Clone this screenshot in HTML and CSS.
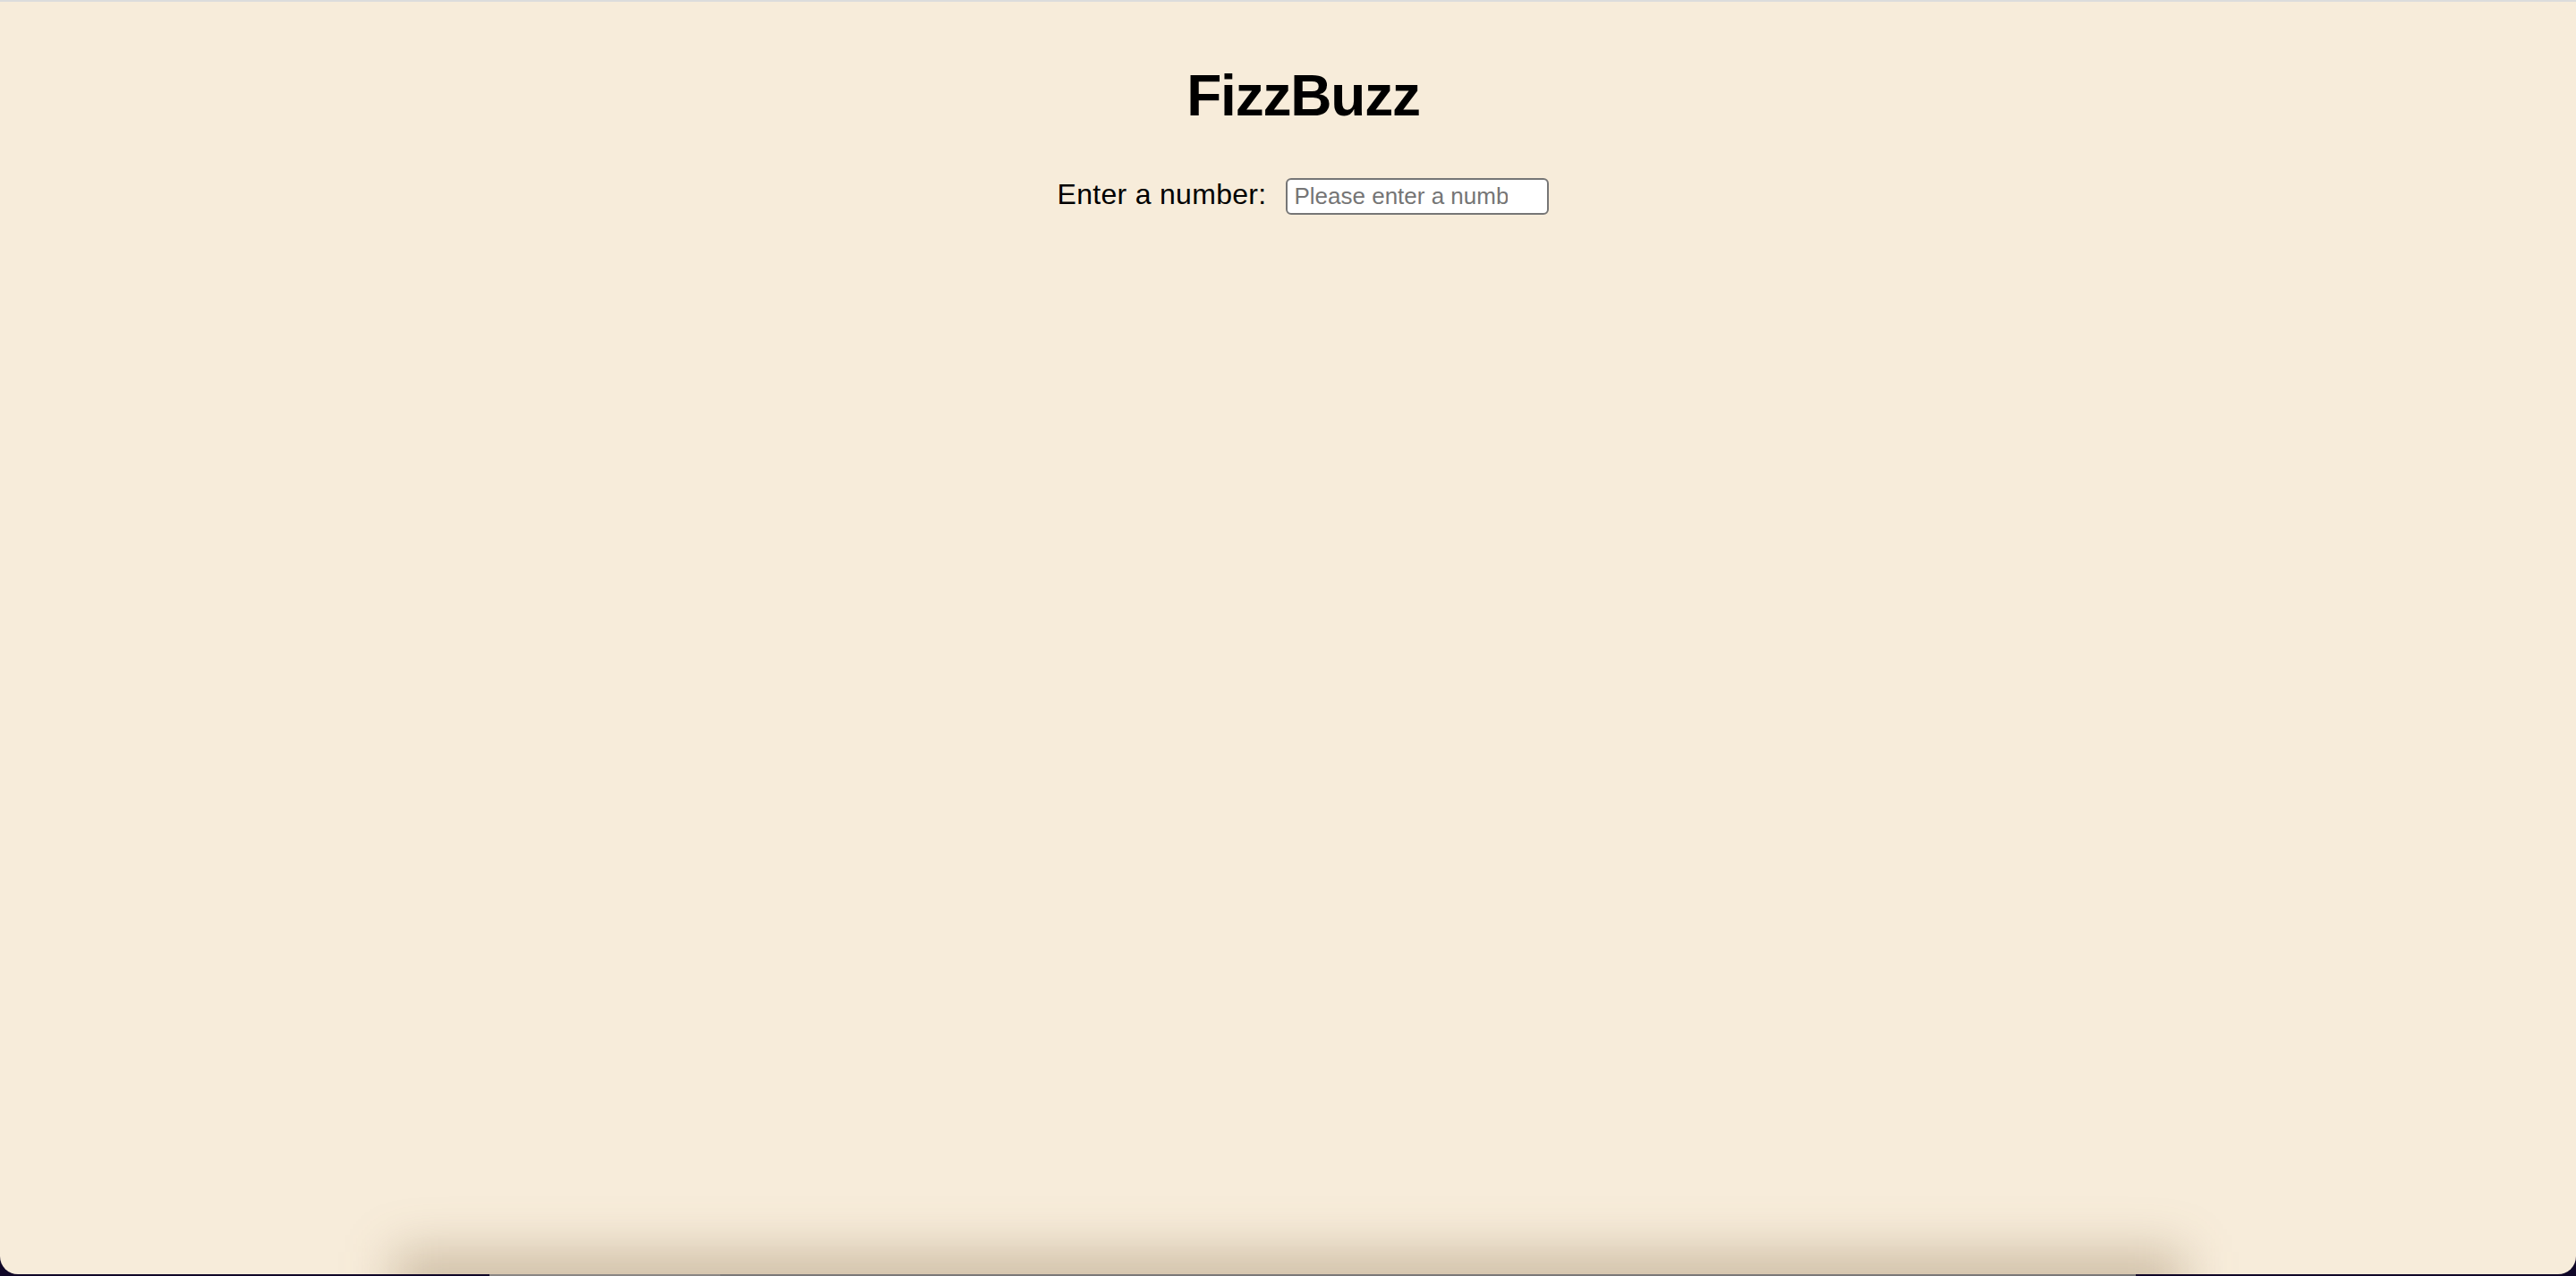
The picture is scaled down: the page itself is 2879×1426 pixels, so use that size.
FILE: index.html
```html
<!DOCTYPE html>
<html lang="en">
<head>
<meta charset="utf-8">
<title>FizzBuzz</title>
<link rel="stylesheet" href="styles.css">
</head>
<body>
  <div class="window">
    <main class="app">
      <h1 class="title">FizzBuzz</h1>
      <div class="row">
        <label class="label" for="num">Enter a number:</label>
        <input class="field" id="num" type="text" placeholder="Please enter a number">
      </div>
    </main>
    <div class="shadow"></div>
  </div>
  <div class="desk">
    <div class="dock-a"></div>
    <div class="dock-b"></div>
  </div>
</body>
</html>
```

FILE: styles.css
```css
html, body {
  margin: 0;
  padding: 0;
  background: #100728;
  overflow: hidden;
}

.window {
  position: relative;
  height: 1424px;
  box-sizing: border-box;
  background: #f7ecda;
  border-top: 2px solid #dcdcdc;
  border-radius: 0 0 20px 20px;
  overflow: hidden;
}

.app {
  display: flex;
  flex-direction: column;
  align-items: center;
  padding: 69px 0 0 34px;
  font-family: "Liberation Sans", Arial, sans-serif;
  color: #000;
}

.title {
  margin: 0;
  font-size: 64px;
  line-height: 72px;
  font-weight: 700;
  letter-spacing: -1.2px;
}

.row {
  display: flex;
  align-items: flex-start;
  gap: 22px;
  margin-top: 54px;
}

.label {
  margin-top: 2px;
  font-size: 32px;
  line-height: 37px;
  letter-spacing: 0.3px;
}

.field {
  margin-top: 2px;
  width: 294px;
  height: 41px;
  box-sizing: border-box;
  padding: 0 44px 0 7px;
  border: 2px solid #767676;
  border-radius: 6px;
  background: #fff;
  font-family: "Liberation Sans", Arial, sans-serif;
  font-size: 26px;
  color: #000;
  outline: none;
}

.field::placeholder {
  color: #757575;
}

.shadow {
  position: absolute;
  left: 440px;
  width: 2000px;
  bottom: -45px;
  height: 70px;
  background: rgba(110, 80, 40, 0.3);
  filter: blur(28px);
  pointer-events: none;
}

.desk {
  display: flex;
  height: 2px;
  padding-left: 547px;
}

.dock-a {
  width: 258px;
  background: #8a8684;
}

.dock-b {
  width: 1582px;
  background: #7a7878;
}
```
